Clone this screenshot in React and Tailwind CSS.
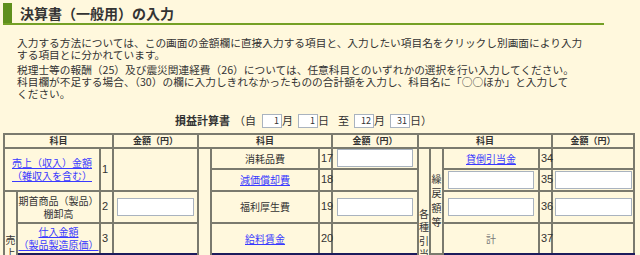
import { useState } from 'react'

const cell = 'border-2 border-[#7a7a6e] p-0 align-middle text-center'
const navyTop = 'border-t-[#1c1c5c]'
const navyBot = 'border-b-[#1c1c5c]'
const num = 'border-2 border-[#7a7a6e] p-0 pl-[1px] align-middle text-left text-[11px] font-["Liberation_Sans",sans-serif]'
const link = 'text-[#3a3aff] underline'
const box = 'block mx-auto h-[18px] border border-[#a9b3bf] bg-white'

function Amt({ w = 'w-[77px]' }) {
  const [v, setV] = useState('')
  return <input className={`${box} ${w}`} value={v} onChange={e=>setV(e.target.value)} />
}

function DateBox({ v }) {
  return (
    <input
      readOnly
      value={v}
      className="h-[14px] w-[20px] border border-[#a9b3bf] bg-white px-[2px] text-right text-[9px] leading-none"
    />
  )
}

export default function App() {
  return (
    <main className="min-h-[255px] bg-[#fff8dd] pt-[3px] text-[#333] font-['Noto_Sans_CJK_JP',sans-serif]">
      {/* 見出し */}
      <div className="ml-[3px] flex w-[601px] items-center border-b-2 border-[#74a025]">
        <div className="h-[20px] w-[9px] bg-[#5f8f1c]" />
        <h1 className="ml-[8px] text-[14px] font-bold leading-[20px]">決算書（一般用）の入力</h1>
      </div>

      <div className="mt-[12px] pl-[17px] text-[10.7px] leading-[12px] whitespace-nowrap">
        <p>
          入力する方法については、この画面の金額欄に直接入力する項目と、入力したい項目名をクリックし別画面により入力<br />
          する項目とに分かれています。
        </p>
        <p className="mt-[3px]">
          税理士等の報酬（25）及び震災関連経費（26）については、任意科目とのいずれかの選択を行い入力してください。<br />
          科目欄が不足する場合、（30）の欄に入力しきれなかったものの合計額を入力し、科目名に「○○ほか」と入力して<br />
          ください。
        </p>
      </div>

      <div className="mt-[12px] flex items-center pl-[175px] text-[11px] leading-[14px]">
        <span className="font-bold">損益計算書</span>
        <span className="ml-[4px]">（自</span>
        <span className="ml-[6px]"><DateBox v="1" /></span>
        <span>月</span>
        <span className="ml-[5px]"><DateBox v="1" /></span>
        <span>日</span>
        <span className="ml-[9px]">至</span>
        <span className="ml-[5px]"><DateBox v="12" /></span>
        <span>月</span>
        <span className="ml-[5px]"><DateBox v="31" /></span>
        <span>日）</span>
      </div>

      <table className="mt-[5px] ml-[3px] w-[630px] table-fixed border-collapse text-[10px] leading-[13px]">
        <colgroup>
          <col className="w-[13px]" />
          <col className="w-[83px]" />
          <col className="w-[13px]" />
          <col className="w-[85px]" />
          <col className="w-[13px]" />
          <col className="w-[108px]" />
          <col className="w-[13px]" />
          <col className="w-[86px]" />
          <col className="w-[12px]" />
          <col className="w-[13px]" />
          <col className="w-[96px]" />
          <col className="w-[13px]" />
          <col className="w-[82px]" />
        </colgroup>
        <thead>
          <tr className="h-[14px] text-[9px] font-bold leading-[10px]">
            <th colSpan={3} className={cell}>科目</th>
            <th className={cell}>金額（円）</th>
            <th colSpan={3} className={cell}>科目</th>
            <th className={cell}>金額（円）</th>
            <th colSpan={4} className={cell}>科目</th>
            <th className={cell}>金額（円）</th>
          </tr>
        </thead>
        <tbody>
          <tr className="h-[21px]">
            <td colSpan={2} rowSpan={2} className={cell}>
              <a href="#" className={link}>売上（収入）金額<br />（雑収入を含む）</a>
            </td>
            <td rowSpan={2} className={num}>1</td>
            <td rowSpan={2} className={cell}></td>
            <td rowSpan={6} className={cell}></td>
            <td className={cell}>消耗品費</td>
            <td className={num}>17</td>
            <td className={cell}><Amt w="w-[76px] h-[17px]" /></td>
            <td rowSpan={6} className={`${cell} align-top pt-[58px] leading-[13.5px]`}>各<br />種<br />引<br />当</td>
            <td rowSpan={4} className={`${cell} leading-[14.5px]`}>繰<br />戻<br />額<br />等</td>
            <td className={cell}><a href="#" className={link}>貸倒引当金</a></td>
            <td className={num}>34</td>
            <td className={cell}></td>
          </tr>
          <tr className="h-[22px]">
            <td className={cell}><a href="#" className={link}>減価償却費</a></td>
            <td className={num}>18</td>
            <td className={cell}></td>
            <td className={cell}><Amt w="w-[86px]" /></td>
            <td className={num}>35</td>
            <td className={cell}><Amt /></td>
          </tr>
          <tr className="h-[32px]">
            <td rowSpan={4} className={`${cell} align-top pt-[41px] leading-[13px]`}>売<br />上<br />原<br />価</td>
            <td className={cell}>期首商品（製品）<br />棚卸高</td>
            <td className={num}>2</td>
            <td className={cell}><Amt /></td>
            <td className={cell}>福利厚生費</td>
            <td className={num}>19</td>
            <td className={cell}><Amt w="w-[76px]" /></td>
            <td className={cell}><Amt w="w-[86px]" /></td>
            <td className={num}>36</td>
            <td className={cell}><Amt /></td>
          </tr>
          <tr className="h-[31px]">
            <td className={`${cell} ${navyBot}`}>
              <a href="#" className={link}>仕入金額<br />（製品製造原価）</a>
            </td>
            <td className={`${num} ${navyBot}`}>3</td>
            <td className={`${cell} ${navyBot}`}></td>
            <td className={`${cell} ${navyBot}`}><a href="#" className={link}>給料賃金</a></td>
            <td className={`${num} ${navyBot}`}>20</td>
            <td className={`${cell} ${navyBot}`}></td>
            <td className={`${cell} ${navyBot} text-[#777]`}>計</td>
            <td className={`${num} ${navyBot}`}>37</td>
            <td className={`${cell} ${navyBot}`}></td>
          </tr>
          <tr className="h-[32px]">
            <td className={`${cell} ${navyTop}`}>期末商品（製品）<br />棚卸高</td>
            <td className={`${num} ${navyTop}`}>4</td>
            <td className={`${cell} ${navyTop}`}><Amt /></td>
            <td className={`${cell} ${navyTop}`}>外注工賃</td>
            <td className={`${num} ${navyTop}`}>21</td>
            <td className={`${cell} ${navyTop}`}><Amt w="w-[76px]" /></td>
            <td className={cell}></td>
            <td className={`${cell} ${navyTop}`}>専従者控除前の所得金額</td>
            <td className={`${num} ${navyTop}`}>38</td>
            <td className={`${cell} ${navyTop}`}></td>
          </tr>
          <tr className="h-[32px]">
            <td className={cell}>差引原価</td>
            <td className={num}>5</td>
            <td className={cell}></td>
            <td className={cell}>利子割引料</td>
            <td className={num}>22</td>
            <td className={cell}><Amt w="w-[76px]" /></td>
            <td className={cell}></td>
            <td className={cell}></td>
            <td className={num}>39</td>
            <td className={cell}></td>
          </tr>
        </tbody>
      </table>
    </main>
  )
}
